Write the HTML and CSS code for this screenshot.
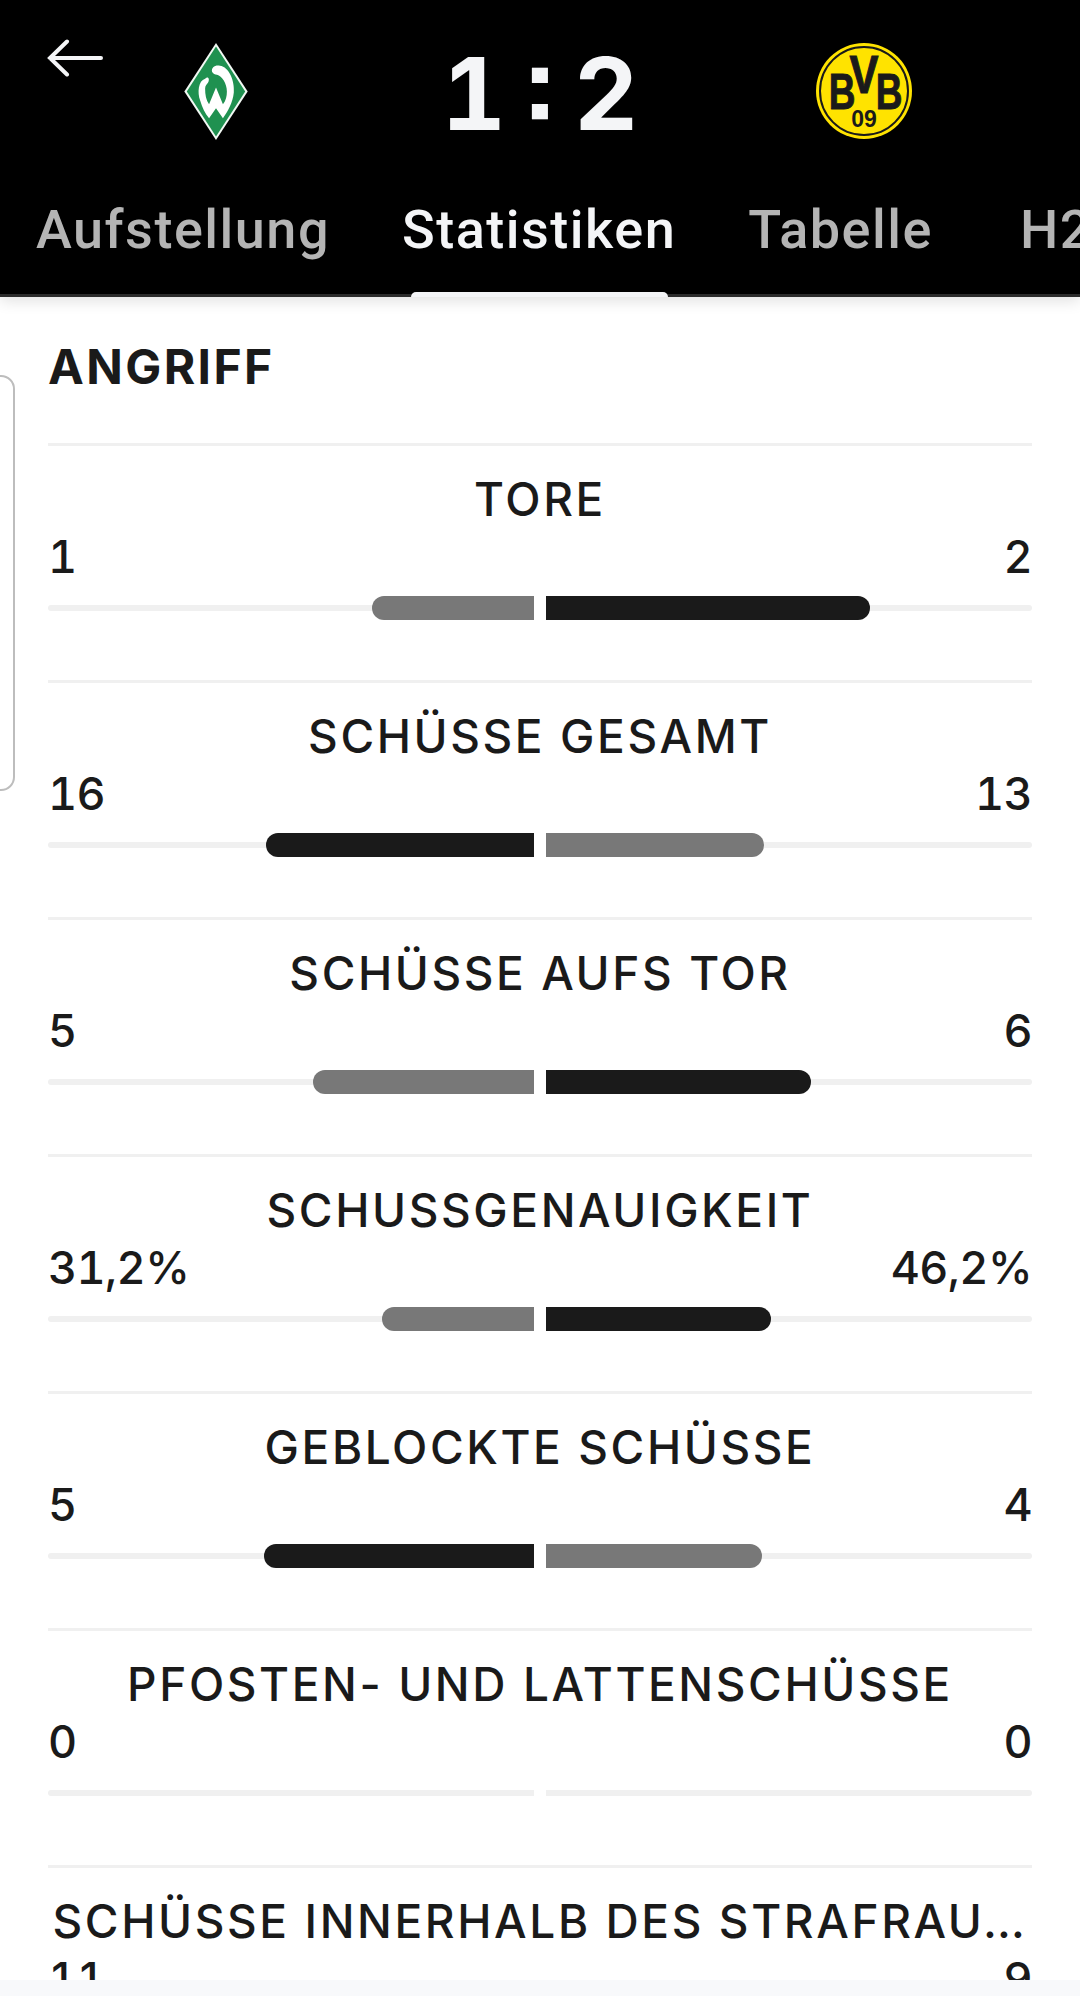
FILE: index.html
```html
<!DOCTYPE html>
<html lang="de">
<head>
<meta charset="utf-8">
<title>Statistiken</title>
<link rel="stylesheet" href="styles.css">
</head>
<body>
<div class="screen">
  <header class="header">
    <div class="scorebar">
      <svg class="back" viewBox="0 0 56 38" width="56" height="38" aria-label="Zurück"><path d="M54 19H3M20 2.500 3 19l17 16.500" fill="none" stroke="#f4f5f7" stroke-width="4" stroke-linecap="round" stroke-linejoin="miter"/></svg>
      <svg class="crest-home" viewBox="0 0 64 98" width="64" height="97" aria-label="Werder Bremen">
        <path d="M32 0 64 49 32 98 0 49Z" fill="#f2f9f4"/>
        <path d="M32 3.500 61.500 49 32 94.500 2.500 49Z" fill="#1f9150"/>
        <path d="M21 36C14 38 13 50 16 58 18 65 21 71 25 76L32 66 39 76C44 69 49 60 50 50 51 38 45 24 36 23 31 22 27 25 28 29 29 31 31 32 33 32 38 33 43 41 43 49 43 54 42 58 39 62L32 45 25 62C22 58 21 52 21 46 21 43 23 42 24 40 26 36 24 33 21 36Z" fill="#fff"/>
      </svg>
      <div class="score">1 : 2</div>
      <svg class="crest-away" viewBox="0 0 98 98" width="98" height="98" aria-label="Borussia Dortmund">
        <circle cx="49" cy="49" r="48" fill="#ffe300"/>
        <circle cx="49" cy="49" r="44" fill="none" stroke="#1a1a1a" stroke-width="2"/>
        <text class="bvb-b" transform="translate(27 67) scale(.74 1)" text-anchor="middle">B</text>
        <text class="bvb-v" transform="translate(49 51) scale(.82 1)" text-anchor="middle">V</text>
        <text class="bvb-b" transform="translate(74 67) scale(.74 1)" text-anchor="middle">B</text>
        <text class="bvb-09" x="49" y="85" text-anchor="middle">09</text>
      </svg>
    </div>
    <nav class="tabs">
      <span class="tab">Aufstellung</span>
      <span class="tab tab-active">Statistiken</span>
      <span class="tab">Tabelle</span>
      <span class="tab tab-h2h">H2H</span>
    </nav>
  </header>
  <div class="side-handle"></div>
  <main class="content">
    <h2 class="section">ANGRIFF</h2>

    <section class="stat">
      <div class="stat-label">TORE</div>
      <div class="values"><span>1</span><span>2</span></div>
      <div class="bars">
        <div class="track track-left"><div class="fill fill-left fill-muted" style="width:33.33%"></div></div>
        <div class="track track-right"><div class="fill fill-right fill-strong" style="width:66.67%"></div></div>
      </div>
    </section>

    <section class="stat">
      <div class="stat-label">SCHÜSSE GESAMT</div>
      <div class="values"><span>16</span><span>13</span></div>
      <div class="bars">
        <div class="track track-left"><div class="fill fill-left fill-strong" style="width:55.17%"></div></div>
        <div class="track track-right"><div class="fill fill-right fill-muted" style="width:44.83%"></div></div>
      </div>
    </section>

    <section class="stat">
      <div class="stat-label">SCHÜSSE AUFS TOR</div>
      <div class="values"><span>5</span><span>6</span></div>
      <div class="bars">
        <div class="track track-left"><div class="fill fill-left fill-muted" style="width:45.45%"></div></div>
        <div class="track track-right"><div class="fill fill-right fill-strong" style="width:54.55%"></div></div>
      </div>
    </section>

    <section class="stat">
      <div class="stat-label">SCHUSSGENAUIGKEIT</div>
      <div class="values"><span>31,2%</span><span>46,2%</span></div>
      <div class="bars">
        <div class="track track-left"><div class="fill fill-left fill-muted" style="width:31.2%"></div></div>
        <div class="track track-right"><div class="fill fill-right fill-strong" style="width:46.2%"></div></div>
      </div>
    </section>

    <section class="stat">
      <div class="stat-label">GEBLOCKTE SCHÜSSE</div>
      <div class="values"><span>5</span><span>4</span></div>
      <div class="bars">
        <div class="track track-left"><div class="fill fill-left fill-strong" style="width:55.56%"></div></div>
        <div class="track track-right"><div class="fill fill-right fill-muted" style="width:44.44%"></div></div>
      </div>
    </section>

    <section class="stat">
      <div class="stat-label">PFOSTEN- UND LATTENSCHÜSSE</div>
      <div class="values"><span>0</span><span>0</span></div>
      <div class="bars">
        <div class="track track-left"></div>
        <div class="track track-right"></div>
      </div>
    </section>

    <section class="stat">
      <div class="stat-label">SCHÜSSE INNERHALB DES STRAFRAU…</div>
      <div class="values"><span>11</span><span>9</span></div>
    </section>
  </main>
  <div class="nav-strip"></div>
</div>
</body>
</html>
```
FILE: styles.css
```css
* { box-sizing: border-box; }
html, body { margin: 0; padding: 0; background: #fff; }
.screen {
  width: 1080px;
  height: 2000px;
  position: relative;
  overflow: hidden;
  display: flex;
  flex-direction: column;
  font-family: Inter, "Liberation Sans", sans-serif;
  color: #1a1a1a;
}
.header {
  height: 297px;
  flex: none;
  background: #000;
  box-shadow: 0 4px 14px rgba(0, 0, 0, 0.12);
  display: flex;
  flex-direction: column;
  position: relative;
  z-index: 2;
}
.scorebar {
  height: 188px;
  flex: none;
  position: relative;
  display: flex;
  justify-content: center;
  align-items: center;
}
.back { position: absolute; left: 47px; top: 39px; }
.crest-home { position: absolute; left: 184px; top: 43px; }
.crest-away { position: absolute; left: 815px; top: 42px; }
.bvb-b, .bvb-v { stroke: #1a1a1a; stroke-width: 1px; fill: #1a1a1a; }
.bvb-b { font: 700 50px "Liberation Sans", sans-serif; }
.bvb-v { font: 700 53px "Liberation Sans", sans-serif; }
.bvb-09 { font: 700 23px "Liberation Sans", sans-serif; fill: #1a1a1a; }
.score {
  font-family: Inter, sans-serif;
  font-weight: 700;
  font-size: 100px;
  line-height: 100px;
  word-spacing: -6.500px;
  font-feature-settings: "tnum", "ss07";
  color: #f4f5f7;
}
.tabs {
  flex: 1;
  display: flex;
  align-items: flex-start;
  gap: 72px;
  padding: 12px 0 0 36px;
  overflow: hidden;
  box-shadow: inset 0 -3px 0 #2b2b2b;
  font-family: Roboto, sans-serif;
  font-weight: 500;
  font-size: 54px;
  line-height: 60px;
  letter-spacing: 1.500px;
  white-space: nowrap;
  color: #b4b4b4;
}
.tab { position: relative; height: 97px; flex: none; }
.tab-active { color: #f4f5f7; }
.tab-active::after {
  content: "";
  position: absolute;
  left: 9px;
  right: 8px;
  bottom: 0;
  height: 5px;
  background: #f3f4f6;
  border-radius: 6px 6px 0 0;
}
.tab-h2h { margin-left: 15px; }
.side-handle {
  position: absolute;
  left: -20px;
  top: 375px;
  width: 35px;
  height: 416px;
  border: 2px solid #bdbdbd;
  border-radius: 14px;
}
.content {
  flex: 1;
  padding: 0 48px;
  min-height: 0;
  overflow: hidden;
}
.section {
  margin: 0;
  height: 146px;
  padding-top: 42px;
  font-size: 48px;
  line-height: 56px;
  font-weight: 700;
  letter-spacing: 2.400px;
}
.stat {
  height: 237px;
  border-top: 3px solid #f0f0f0;
  padding-top: 24px;
}
.stat-label {
  font-size: 46px;
  line-height: 58px;
  font-weight: 500;
  letter-spacing: 2.600px;
  text-align: center;
  white-space: nowrap;
}
.values {
  display: flex;
  justify-content: space-between;
  font-size: 45px;
  line-height: 58px;
  font-weight: 500;
  letter-spacing: -0.600px;
  font-feature-settings: "tnum";
}
.bars {
  display: flex;
  gap: 12px;
  margin-top: 10px;
  height: 24px;
  align-items: center;
}
.track {
  flex: 1;
  height: 6px;
  background: #f0f0f0;
  position: relative;
  display: flex;
  align-items: center;
}
.track-left { justify-content: flex-end; border-radius: 3px 0 0 3px; }
.track-right { justify-content: flex-start; border-radius: 0 3px 3px 0; }
.fill { height: 24px; flex: none; }
.fill-left { border-radius: 12px 0 0 12px; }
.fill-right { border-radius: 0 12px 12px 0; }
.fill-strong { background: #1a1a1a; }
.fill-muted { background: #787878; }
.nav-strip {
  flex: none;
  height: 16px;
  margin-bottom: 4px;
  background: #f8f9fb;
}
```
